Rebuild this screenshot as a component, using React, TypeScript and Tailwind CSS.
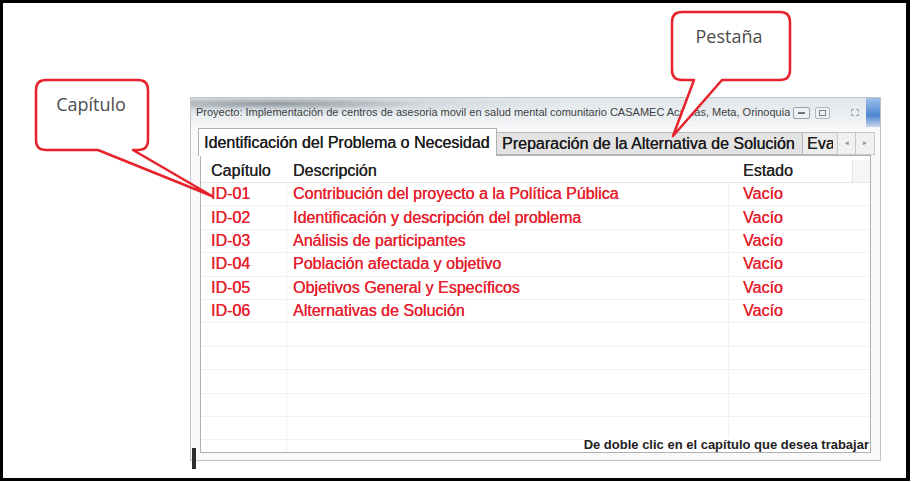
import React from 'react';

const rows = [
    ['ID-01', 'Contribución del proyecto a la Política Pública', 'Vacío'],
    ['ID-02', 'Identificación y descripción del problema', 'Vacío'],
    ['ID-03', 'Análisis de participantes', 'Vacío'],
    ['ID-04', 'Población afectada y objetivo', 'Vacío'],
    ['ID-05', 'Objetivos General y Específicos', 'Vacío'],
    ['ID-06', 'Alternativas de Solución', 'Vacío'],
];

const emptyRows = [0, 1, 2, 3, 4, 5];

const App = () => {
    return (
        <div className="relative w-[912px] h-[482px] bg-white overflow-hidden font-['Liberation_Sans',Arial,sans-serif]">
            {/* Black frame */}
            <div className="w-[910px] h-[481px] border-t-[3px] border-l-[3px] border-r-[4px] border-b-[3px] border-black">
                {/* Window */}
                <div className="relative ml-[187px] mt-[94px] w-[691px] h-[364px] border border-[#bfc4c8] bg-[#f9f9f9] flex flex-col">
                    {/* Title bar */}
                    <div className="h-[29px] flex items-center pl-[5px] bg-[radial-gradient(ellipse_at_12%_20%,#8f999f_0%,rgba(200,208,214,0.6)_18%,transparent_35%),linear-gradient(to_bottom,#e1e6ea,#f3f5f7)]">
                        <div className="w-[594px] overflow-hidden whitespace-nowrap text-[11px] text-[#3b3f43] leading-none">
                            Proyecto: Implementación de centros de asesoria movil en salud mental comunitario CASAMEC Acacías, Meta, Orinoquia
                        </div>
                        <div className="flex items-center ml-auto h-full">
                            <div className="w-[17px] h-[12px] rounded-[2px] border border-[#9aa2a8] bg-[#eef1f3] flex items-center justify-center">
                                <div className="w-[7px] h-[2px] border border-[#6d757b]" />
                            </div>
                            <div className="ml-[5px] w-[15px] h-[12px] rounded-[2px] border border-[#b3b9be] bg-[#eef1f3] flex items-center justify-center">
                                <div className="w-[7px] h-[6px] border border-[#7d858b]" />
                            </div>
                            <div className="ml-[18px] w-[14px] h-[12px] flex items-center justify-center">
                                <div className="w-[8px] h-[7px] border border-dashed border-[#9aa2a8]" />
                            </div>
                            <div className="ml-[4px] w-[14px] h-full bg-[linear-gradient(to_bottom,#9ec0ea,#4e86d3_60%,#c9d7ea)]" />
                        </div>
                    </div>

                    {/* Tabs */}
                    <div className="h-[28px] flex items-end pl-[7px] text-[16px] text-[#1c1c1c] [text-shadow:0.3px_0_0_currentColor]">
                        <div className="relative z-10 -mb-px w-[299px] h-[28px] bg-white border border-b-0 border-[#adb2b5] px-[5px] flex items-center whitespace-nowrap">
                            Identificación del Problema o Necesidad
                        </div>
                        <div className="-ml-px w-[307px] h-[23px] bg-[#e3e3e3] border border-[#b4b8bb] pl-[5px] flex items-center whitespace-nowrap">
                            Preparación de la Alternativa de Solución
                        </div>
                        <div className="-ml-px w-[36px] h-[23px] bg-[#ececec] border border-[#b4b8bb] pl-[4px] flex items-center whitespace-nowrap overflow-hidden">
                            <span className="w-[26px] overflow-hidden">Eva</span>
                        </div>
                        <div className="-ml-px w-[19px] h-[23px] bg-[#f1f1f1] border border-[#c4c8cb] flex items-center justify-center text-[7px] text-[#9a9a9a]">
                            ◂
                        </div>
                        <div className="-ml-px w-[20px] h-[23px] bg-[#f1f1f1] border border-[#c4c8cb] flex items-center justify-center text-[7px] text-[#9a9a9a]">
                            ▸
                        </div>
                    </div>

                    {/* Panel */}
                    <div className="relative ml-[9px] w-[671px] h-[298px] border border-[#adb2b5] bg-white overflow-hidden text-[16px] [text-shadow:0.3px_0_0_currentColor]">
                        {/* Header */}
                        <div className="h-[27px] pt-[4px] flex items-center border-b border-[#e6e6e6] text-[#232323]">
                            <div className="w-[86px] pl-[10px]">Capítulo</div>
                            <div className="w-[442px] pl-[6px]">Descripción</div>
                            <div className="w-[124px] pl-[14px] h-full flex items-center border-r border-[#e2e2e2]">Estado</div>
                            <div className="flex-1 h-full bg-[#f6f6f6]" />
                        </div>

                        {/* Rows */}
                        {rows.map(([id, desc, state]) => (
                            <div key={id} className="h-[23.4px] flex items-center border-b border-[#f1f1f1] text-[#e8202d] whitespace-nowrap">
                                <div className="w-[86px] h-full pl-[10px] flex items-center border-r border-[#f1f1f1]">{id}</div>
                                <div className="w-[442px] h-full pl-[6px] flex items-center border-r border-[#f1f1f1]">{desc}</div>
                                <div className="w-[124px] pl-[14px]">{state}</div>
                            </div>
                        ))}
                        {emptyRows.map((i) => (
                            <div key={i} className="h-[23.4px] flex border-b border-[#f1f1f1]">
                                <div className="w-[86px] h-full border-r border-[#f1f1f1]" />
                                <div className="w-[442px] h-full border-r border-[#f1f1f1]" />
                            </div>
                        ))}

                        {/* Hint */}
                        <div className="absolute right-[1px] bottom-0 bg-white text-[13px] leading-[15px] font-bold text-[#1e1e1e] whitespace-nowrap [text-shadow:none]">
                            De doble clic en el capítulo que desea trabajar
                        </div>
                    </div>

                    {/* edge artifact */}
                    <div className="absolute left-[1px] top-[350px] w-[4px] h-[21px] bg-[#2e2e2e]" />
                </div>
            </div>

            {/* Callouts */}
            <svg className="absolute inset-0 pointer-events-none" width="912" height="482" viewBox="0 0 912 482">
                <path
                    d="M 46 80 H 138 Q 148 80 148 90 V 140 Q 148 150 138 150 H 133 L 212 196 L 98 150 H 46 Q 36 150 36 140 V 90 Q 36 80 46 80 Z"
                    fill="white"
                    stroke="#e6232c"
                    strokeWidth="2.5"
                    strokeLinejoin="round"
                />
                <text x="91" y="111" textAnchor="middle" fontFamily="'Open Sans', sans-serif" fontSize="18" fill="#4d4d4d">
                    Capítulo
                </text>
                <path
                    d="M 682 12 H 780 Q 790 12 790 22 V 70 Q 790 80 780 80 H 722 L 673 136 L 694 80 H 682 Q 672 80 672 70 V 22 Q 672 12 682 12 Z"
                    fill="white"
                    stroke="#e6232c"
                    strokeWidth="2.5"
                    strokeLinejoin="round"
                />
                <text x="729" y="43" textAnchor="middle" fontFamily="'Open Sans', sans-serif" fontSize="18" fill="#4d4d4d">
                    Pestaña
                </text>
            </svg>
        </div>
    );
};

export default App;
